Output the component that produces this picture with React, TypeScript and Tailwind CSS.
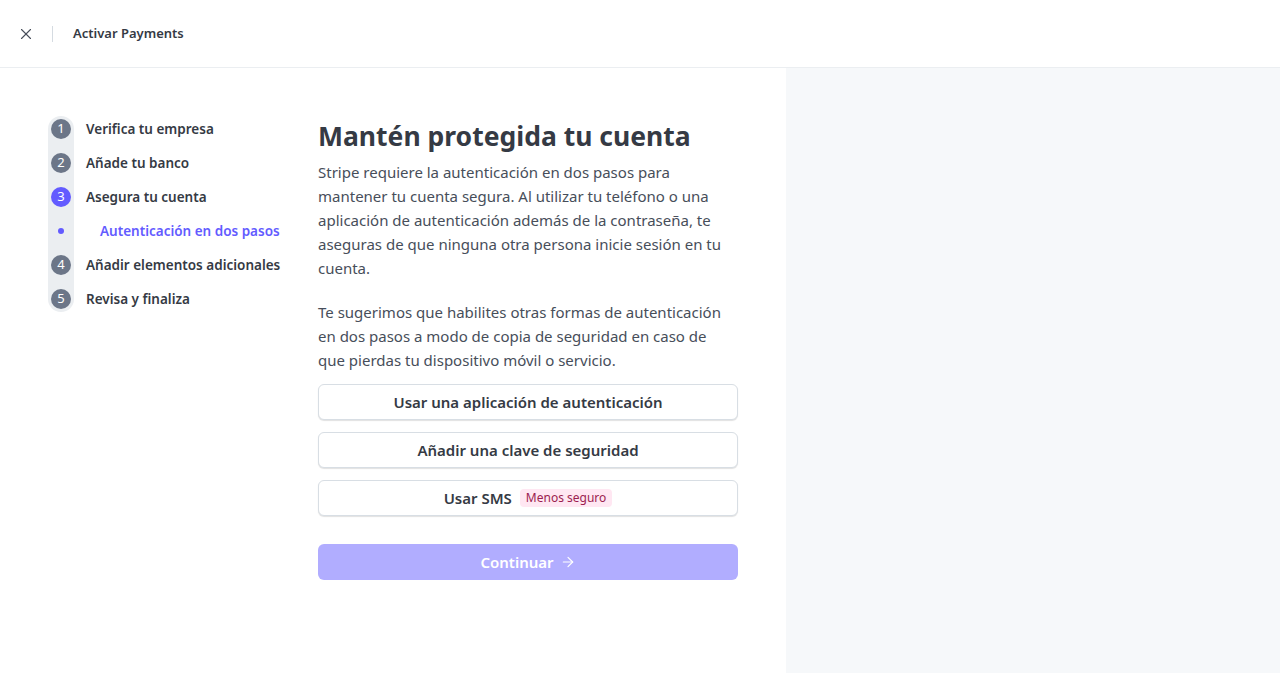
import React from 'react';
import { X, ArrowRight } from 'lucide-react';

const steps = [
  { n: '1', label: 'Verifica tu empresa' },
  { n: '2', label: 'Añade tu banco' },
  { n: '3', label: 'Asegura tu cuenta', active: true },
  { n: '', label: 'Autenticación en dos pasos', sub: true },
  { n: '4', label: 'Añadir elementos adicionales' },
  { n: '5', label: 'Revisa y finaliza' },
];

export default function App() {
  return (
    <div className="h-[673px] w-[1280px] flex flex-col bg-white text-[#353a44]" style={{ fontFamily: '"Noto Sans", "Open Sans", sans-serif' }}>
      {/* Header */}
      <header className="h-[68px] shrink-0 border-b border-[#ebeef1] flex items-center pl-[17px] pt-px">
        <X className="w-[18px] h-[18px] text-[#474e5a]" strokeWidth={1.5} />
        <div className="w-px h-4 bg-[#d5dbe1] ml-[17px]" />
        <span className="ml-5 text-[13px] font-semibold">Activar Payments</span>
      </header>

      <div className="flex flex-1 min-h-0">
        {/* Left content */}
        <div className="w-[786px] shrink-0 flex pt-[44px] pl-[48px]">
          {/* Stepper */}
          <nav className="relative w-[270px] shrink-0">
            <div className="absolute left-0 top-[4px] w-[26px] h-[196px] bg-[#ebeef1] rounded-full" />
            <ul className="relative">
              {steps.map((s, i) => (
                <li key={i} className="h-[34px] flex items-center">
                  <div className="w-[26px] flex justify-center">
                    {s.sub ? (
                      <span className="w-[6px] h-[6px] rounded-full bg-[#635bff]" />
                    ) : (
                      <span
                        className={`w-5 h-5 rounded-full flex items-center justify-center text-white text-[13px] ${
                          s.active ? 'bg-[#635bff]' : 'bg-[#6c7688]'
                        }`}
                      >
                        {s.n}
                      </span>
                    )}
                  </div>
                  <span
                    className={`text-[13.5px] font-semibold ${
                      s.sub ? 'ml-[26px] text-[#635bff]' : 'ml-3 text-[#353a44]'
                    }`}
                  >
                    {s.label}
                  </span>
                </li>
              ))}
            </ul>
          </nav>

          {/* Main */}
          <main className="w-[420px] pt-[6px]">
            <h1 className="text-[26.5px] leading-[36px] font-bold text-[#353a44]">Mantén protegida tu cuenta</h1>
            <p className="mt-[6px] w-[418px] text-[15px] leading-[24px] text-[#474e5a]">
              Stripe requiere la autenticación en dos pasos para mantener tu cuenta segura. Al utilizar tu teléfono o una
              aplicación de autenticación además de la contraseña, te aseguras de que ninguna otra persona inicie sesión en tu
              cuenta.
            </p>
            <p className="mt-5 w-[418px] text-[15px] leading-[24px] text-[#474e5a]">
              Te sugerimos que habilites otras formas de autenticación en dos pasos a modo de copia de seguridad en caso de
              que pierdas tu dispositivo móvil o servicio.
            </p>

            <div className="mt-3 flex flex-col gap-3">
              <button className="h-9 w-full rounded-md border border-[#d8dee4] bg-white shadow-[0_1px_1px_rgba(0,0,0,0.12)] text-[15px] font-semibold text-[#353a44]">
                Usar una aplicación de autenticación
              </button>
              <button className="h-9 w-full rounded-md border border-[#d8dee4] bg-white shadow-[0_1px_1px_rgba(0,0,0,0.12)] text-[15px] font-semibold text-[#353a44]">
                Añadir una clave de seguridad
              </button>
              <button className="h-9 w-full rounded-md border border-[#d8dee4] bg-white shadow-[0_1px_1px_rgba(0,0,0,0.12)] text-[15px] font-semibold text-[#353a44] flex items-center justify-center gap-2">
                Usar SMS
                <span className="px-[6px] h-[18px] flex items-center rounded bg-[#ffe7f2] text-[12px] font-normal text-[#9c1d4f]">
                  Menos seguro
                </span>
              </button>
            </div>

            <button className="mt-[28px] h-9 w-full rounded-md bg-[#b1adff] text-white text-[15px] font-semibold flex items-center justify-center gap-[6px]">
              Continuar
              <ArrowRight className="w-[16px] h-[16px]" strokeWidth={1.75} />
            </button>
          </main>
        </div>

        {/* Right panel */}
        <aside className="flex-1 bg-[#f6f8fa]" />
      </div>
    </div>
  );
}
